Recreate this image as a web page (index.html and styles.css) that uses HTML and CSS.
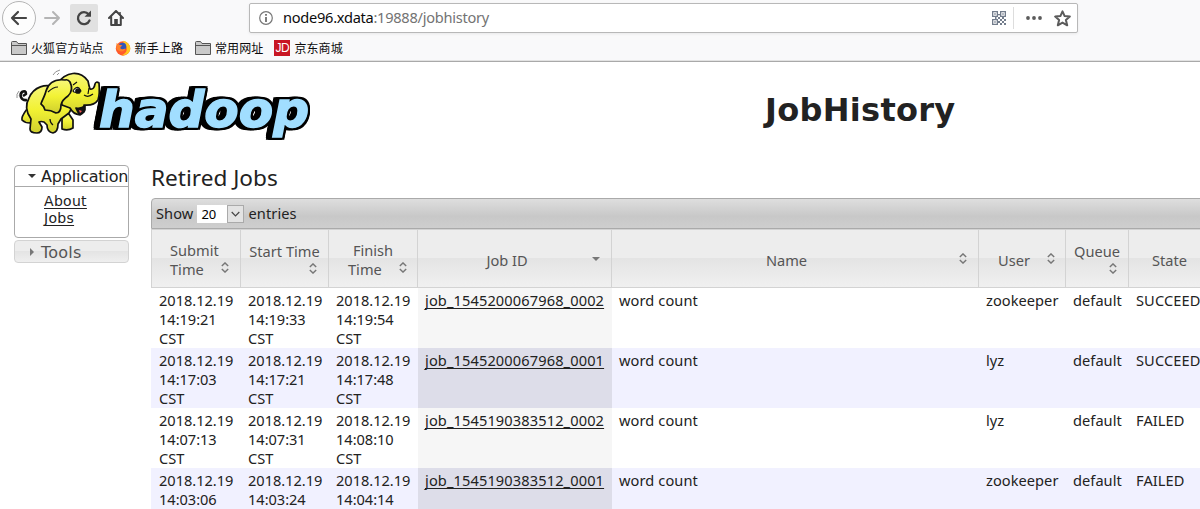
FILE: index.html
```html
<!DOCTYPE html>
<html lang="en">
<head>
<meta charset="utf-8">
<title>JobHistory</title>
<link rel="stylesheet" href="styles.css">
</head>
<body>
<svg class="defs" width="0" height="0">
  <symbol id="sort" viewBox="0 0 8 11"><path d="M.8 4 4 .9 7.200 4M.8 7 4 10.100 7.200 7" fill="none" stroke="#777" stroke-width="1.400"/></symbol>
  <symbol id="folder" viewBox="0 0 16 14"><path d="M.5 13.500V1.500q0-1 1-1h4l1.500 2h8.500v11z" fill="#c9c9c9" stroke="#555"/><path d="M1 4.500h14" stroke="#555"/></symbol>
</svg>
<header class="browser">
  <div class="nav">
    <svg class="back" viewBox="0 0 36 36"><circle cx="18" cy="18" r="16.500" fill="#fdfdfd" stroke="#b5b5b5"/><path d="M25 18H11M17 12l-6 6 6 6" fill="none" stroke="#444" stroke-width="2.200" stroke-linecap="round" stroke-linejoin="round"/></svg>
    <svg class="forward" viewBox="0 0 18 18"><path d="M2 9h14M10 3l6 6-6 6" fill="none" stroke="#b4b4b4" stroke-width="2" stroke-linecap="round" stroke-linejoin="round"/></svg>
    <span class="reload"><svg viewBox="0 0 16 16"><path d="M12.600 4.300A6 6 0 1 0 13.500 10.500" fill="none" stroke="#444" stroke-width="2.300" stroke-linecap="round"/><path d="M15 .6v6.200H8.500z" fill="#444"/></svg></span>
    <svg class="home" viewBox="0 0 16 16"><path d="M1 8 8 1l7 7M3.200 7v8h9.600V7" fill="none" stroke="#444" stroke-width="2" stroke-linecap="round" stroke-linejoin="round"/><path d="M6.200 15V9h3.600v6" fill="#444"/><path d="M12 2v3" stroke="#444" stroke-width="1.500"/></svg>
    <div class="address">
      <svg class="info" viewBox="0 0 14 14"><circle cx="7" cy="7" r="6.300" fill="none" stroke="#777" stroke-width="1.200"/><path d="M7 6v5M7 3v1.800" stroke="#666" stroke-width="1.700"/></svg>
      <span class="url"><b>node96.xdata</b>:19888/jobhistory</span>
      <svg class="qr" viewBox="0 0 14 14" fill="#737d8c"><path fill-rule="evenodd" d="M0 0h6v6H0zM1.300 1.300v3.400h3.400V1.300zM8 0h6v6H8zM9.300 1.300v3.400h3.400V1.300zM0 8h6v6H0zM1.300 9.300v3.400h3.400V9.300z"/><path d="M2.300 2.300h1.400v1.400H2.300zM10.300 2.300h1.400v1.400h-1.400zM2.300 10.300h1.400v1.400H2.300zM6 3h2v1.300H6zM3 6h1.500v2H3zM6 6h2v2H6zM10 6h2v2h-2zM8 8h2v2H8zM12 8h2v2h-2zM6 10h2v2H6zM10 10h2v2h-2zM8 12h2v2H8zM12 12h2v2h-2z"/></svg>
      <span class="divider"></span>
      <svg class="dots" viewBox="0 0 16 4" fill="#5b5b5b"><circle cx="2" cy="2" r="1.900"/><circle cx="8" cy="2" r="1.900"/><circle cx="14" cy="2" r="1.900"/></svg>
      <svg class="star" viewBox="0 0 16 16"><path d="M8 1.300 10 5.700 14.900 6.200 11.200 9.400 12.400 14.400 8 11.900 3.600 14.400 4.800 9.400 1.100 6.200 6 5.700z" fill="none" stroke="#5b5b5b" stroke-width="1.900" stroke-linejoin="round"/></svg>
    </div>
  </div>
  <nav class="bookmarks">
    <span class="mark"><svg viewBox="0 0 16 14"><use href="#folder"/></svg>火狐官方站点</span>
    <span class="mark fox"><svg viewBox="0 0 16 16"><circle cx="8" cy="8.500" r="7.200" fill="#ff5a2b"/><path d="M8 .8c5 1 8 5 7.200 9-1 4-5 6-9 5.500C11 14 13 10 11 6 10 4 8 3 8 .8z" fill="#ffc81f"/><circle cx="7.500" cy="6.500" r="3.800" fill="#3156b8"/><path d="M1.500 3C3 5 5 4.500 7.500 5.500 6 6.500 5 7 5.500 8.500c1.500 1.500 3 .5 5 0C9.500 12 4.500 12.500 1.500 9z" fill="#ff812a"/></svg>新手上路</span>
    <span class="mark web"><svg viewBox="0 0 16 14"><use href="#folder"/></svg>常用网址</span>
    <span class="mark shop"><i>JD</i>京东商城</span>
  </nav>
</header>
<div class="page">
  <div class="banner">
    <svg class="logo" viewBox="0 0 304 80">
      <defs><linearGradient id="skin" x2="0" y2="1"><stop offset="0" stop-color="#f7f77a"/><stop offset=".5" stop-color="#f2f233"/><stop offset="1" stop-color="#cfcf2e"/></linearGradient></defs>
      <g stroke="#111" stroke-width="1.700" stroke-linejoin="round" fill="url(#skin)">
        <path d="M15 33C9 34 7 28 10 25q4-2 4 2l-3 2" fill="none" stroke-width="2.600"/>
        <path d="M15 42q-6 8-5 11 3 3 8 3l3-4z"/>
        <path d="M50 47h7l4 6v8q-5 3-11 1z"/>
        <path d="M17 31C22 19 34 17 42 20L62 37 57 46 49 52 46 57Q46 65 41 66 35 65 35 58L32 55Q29 54 27 55L30 60Q30 66 25 66 18 66 18 62L19 52C14 45 13 38 17 31z"/>
        <path d="M45 17C54 4 68 3 76 14Q77 19 78 22 82 23 83 17 84 14 87 16 88 27 86 33 82 39 72 38 73 45 68 48 61 47 58 41L50 38z"/>
        <path d="M64 41q5 1 9-2 1 8-6 8z" fill="#151515"/><path d="M67 43l3 1-2 2z" fill="#f55" stroke="none"/>
        <path d="M53 13C45 12 37 14 34 24 33 29 29 35 29 37Q32 39 33 43 39 43 44 46 49 46 49 38 50 33 56 29 62 23 58 15 56 12 53 13z"/>
        <path d="M61 24q3-5 6-3l2 3q-4 2-7 1z" fill="#fff" stroke-width="1.200"/><circle cx="66" cy="24" r="2" fill="#111"/>
        <path d="M61 18l4-3M72 28q4 3 9-1M77 21l-1 6M36 25q5-5 10-5M38 52q0 4 3 6" fill="none" stroke-width="1.200"/>
      </g>
      <path d="M41 8q2-4 7-5M45 8l2-2M5 31q-1-4 2-7M7 29l1-2" fill="none" stroke="#777" stroke-width=".8"/>
      <text class="wordmark" x="87" y="60" textLength="210" lengthAdjust="spacingAndGlyphs">hadoop</text>
    </svg>
    <h1>JobHistory</h1>
  </div>
  <div class="columns">
    <aside>
      <div class="panel open">
        <h3><svg viewBox="0 0 8 8"><path d="M0 2h8L4 6z" fill="#333"/></svg>Application</h3>
        <ul><li><a>About</a></li><li><a>Jobs</a></li></ul>
      </div>
      <div class="panel closed"><h3><svg viewBox="0 0 8 8"><path d="M2 0v8l4-4z" fill="#777"/></svg>Tools</h3></div>
    </aside>
    <main>
      <h2>Retired Jobs</h2>
      <div class="toolbar">Show <span class="select"><span>20</span><i><svg viewBox="0 0 9 6"><path d="M.7 1 4.500 4.800 8.300 1" fill="none" stroke="#444" stroke-width="1.200"/></svg></i></span> entries</div>
      <table>
        <colgroup><col class="c-submit"><col class="c-start"><col class="c-finish"><col class="c-id"><col class="c-name"><col class="c-user"><col class="c-queue"><col class="c-state"></colgroup>
        <thead><tr>
          <th><div class="two"><span>Submit<br>Time</span><svg><use href="#sort"/></svg></div></th>
          <th><div class="stack"><span>Start Time</span><svg><use href="#sort"/></svg></div></th>
          <th><div class="two finish"><span><em>Finish</em><br>Time</span><svg><use href="#sort"/></svg></div></th>
          <th><div class="one id"><span>Job ID</span><svg viewBox="0 0 8 11"><path d="M0 4h8L4 8z" fill="#777"/></svg></div></th>
          <th><div class="one name"><span>Name</span><svg><use href="#sort"/></svg></div></th>
          <th><div class="one user"><span>User</span><svg><use href="#sort"/></svg></div></th>
          <th><div class="stack"><span>Queue</span><svg><use href="#sort"/></svg></div></th>
          <th><div class="one state"><span>State</span></div></th>
        </tr></thead>
        <tbody>
          <tr><td>2018.12.19<br>14:19:21<br>CST</td><td>2018.12.19<br>14:19:33<br>CST</td><td>2018.12.19<br>14:19:54<br>CST</td><td class="sorted"><a>job_1545200067968_0002</a></td><td>word count</td><td>zookeeper</td><td>default</td><td>SUCCEEDED</td></tr>
          <tr><td>2018.12.19<br>14:17:03<br>CST</td><td>2018.12.19<br>14:17:21<br>CST</td><td>2018.12.19<br>14:17:48<br>CST</td><td class="sorted"><a>job_1545200067968_0001</a></td><td>word count</td><td>lyz</td><td>default</td><td>SUCCEEDED</td></tr>
          <tr><td>2018.12.19<br>14:07:13<br>CST</td><td>2018.12.19<br>14:07:31<br>CST</td><td>2018.12.19<br>14:08:10<br>CST</td><td class="sorted"><a>job_1545190383512_0002</a></td><td>word count</td><td>lyz</td><td>default</td><td>FAILED</td></tr>
          <tr><td>2018.12.19<br>14:03:06</td><td>2018.12.19<br>14:03:24</td><td>2018.12.19<br>14:04:14</td><td class="sorted"><a>job_1545190383512_0001</a></td><td>word count</td><td>zookeeper</td><td>default</td><td>FAILED</td></tr>
        </tbody>
      </table>
    </main>
  </div>
</div>
</body>
</html>
```

FILE: styles.css
```css
* { box-sizing: border-box; }
html, body { height: 509px; overflow: hidden; }
body { margin: 0; background: #fff; color: #222; font: 14.6px/19px "Noto Sans", "Noto Sans CJK SC", sans-serif; letter-spacing: 0; }
svg { display: block; flex: none; }
.defs { position: absolute; }

.browser { height: 62px; background: #f9f9fa; border-bottom: 1px solid #a9a9a9; box-shadow: inset 0 -1px #e2e2e2; }
.nav { display: flex; align-items: center; height: 36px; padding-left: 1px; }
.back { width: 36px; height: 36px; }
.forward { width: 18px; height: 18px; margin-left: 6px; }
.reload { width: 28px; height: 28px; margin-left: 9px; display: grid; place-items: center; background: #e1e1e1; border-radius: 2px; }
.reload svg { width: 16px; height: 16px; }
.home { width: 16px; height: 16px; margin-left: 10px; }
.address { display: flex; align-items: center; width: 829px; height: 30px; margin-left: 125px; padding: 0 6px 0 9px; background: #fff; border: 1px solid #b8b8b8; border-radius: 2px; box-shadow: 0 1px 3px #0001; }
.info { width: 14px; height: 14px; }
.url { flex: 1; margin: -2px 0 0 10px; color: #737373; letter-spacing: -.27px; }
.url b { font-weight: normal; color: #0c0c0d; }
.qr { width: 14px; height: 14px; }
.divider { width: 1px; height: 22px; margin-left: 7px; background: #ddd; }
.dots { width: 16px; height: 4px; margin-left: 12px; }
.star { width: 17px; height: 17px; margin-left: 12px; }
.bookmarks { display: flex; height: 24px; padding-left: 11px; color: #0c0c0d; font: 12px/24px "Noto Sans CJK SC", sans-serif; letter-spacing: .1px; }
.mark { display: flex; align-items: center; }
.mark svg { width: 16px; height: 14px; margin-right: 4px; }
.mark.fox { margin-left: 11px; }
.mark.fox svg { height: 16px; }
.mark.web { margin-left: 12px; }
.mark.shop { margin-left: 11px; }
.mark i { width: 16px; height: 16px; margin-right: 4px; background: #c81623; color: #fff; font: 12px/16px "Liberation Sans", sans-serif; text-align: center; letter-spacing: -.5px; }

.banner { display: flex; height: 103px; }
.logo { width: 304px; height: 80px; margin: 5px 0 0 12px; }
.wordmark { font: italic bold 50px "DejaVu Sans", sans-serif; fill: #a1deff; stroke: #a1deff; stroke-width: 1.5px; filter: drop-shadow(2px 0 0 #000) drop-shadow(-3px 0 0 #000) drop-shadow(0 2px 0 #000) drop-shadow(0 -2px 0 #000) drop-shadow(-3px 0 0 #000); }
.banner h1 { margin: 29px 0 0 449px; font: bold 32px/38px "DejaVu Sans", sans-serif; letter-spacing: .3px; }

.columns { display: flex; padding-left: 14px; }
aside { width: 115px; flex: none; font-family: "DejaVu Sans", sans-serif; }
.panel { border: 1px solid #aaa; border-radius: 4px; overflow: hidden; }
.panel h3 { display: flex; align-items: center; height: 21px; margin: 0; padding-left: 13px; font-size: 16px; font-weight: normal; letter-spacing: -.2px; }
.panel h3 svg { width: 8px; height: 8px; margin-right: 5px; }
.open { height: 73px; }
.open h3 { border-bottom: 1px solid #aaa; }
.panel ul { list-style: none; margin: 0; padding: 6px 0 0 29px; font-size: 14px; line-height: 17px; letter-spacing: .3px; }
.closed { height: 23px; margin-top: 2px; border-color: #d3d3d3; background: linear-gradient(#ededed 50%, #e4e4e4 50%, #efefef); color: #555; }
.closed h3 { height: 23px; letter-spacing: .2px; }
.closed h3 svg { margin-top: -2px; }
a { text-decoration: underline; text-underline-offset: 2px; text-decoration-skip-ink: none; }

main { width: 1061px; flex: none; margin-left: 22px; }
h2 { margin: 0; height: 33px; padding-top: 1px; font-size: 22.6px; line-height: 24px; font-weight: normal; }
.toolbar { display: flex; align-items: center; gap: 4px; height: 31px; padding-left: 4px; border: 1px solid #aaa; border-radius: 4px 0 0; background: linear-gradient(#dedede, #c8c8c8 60%, #cecece); letter-spacing: .1px; }
.select { display: flex; width: 47px; height: 18px; background: #fff; color: #000; font-size: 13px; line-height: 18px; letter-spacing: -.2px; }
.select span { width: 30px; padding-left: 4px; }
.select i { width: 17px; display: grid; place-items: center; background: #e3e3e3; border: 1px solid #aaa; }
.select svg { width: 9px; height: 6px; }

table { width: 1061px; table-layout: fixed; border-collapse: separate; border-spacing: 0; }
.c-submit { width: 90px; } .c-start { width: 88px; } .c-finish { width: 89px; } .c-id { width: 194px; } .c-name { width: 367px; } .c-user { width: 87px; } .c-queue { width: 63px; } .c-state { width: 83px; }
th { height: 59px; padding: 0; font-weight: normal; color: #555; border: solid #d3d3d3; border-width: 1px 1px 1px 0; background: linear-gradient(#ededed 50%, #e4e4e4 50%, #f0f0f0); }
th:first-child { border-left-width: 1px; }
th svg { width: 8px; height: 11px; }
th div { height: 57px; display: flex; }
.two { align-items: center; padding: 3px 0 0 18px; }
.two span { width: 50px; text-align: left; white-space: nowrap; }
.two em { font-style: normal; margin-left: 5px; }
.two.finish { padding-left: 19px; }
.two svg { margin: 15px 0 0 1px; }
.stack { flex-direction: column; justify-content: center; padding: 0 11px 0 0; }
.stack span { margin: -2px -11px 0 0; }
.stack svg { align-self: flex-end; margin-top: 2px; }
.one { align-items: center; padding: 4px 11px 0 2px; }
.one span { flex: 1; text-align: center; }
.one svg { margin-bottom: 4px; }
.one.user { padding-right: 10px; padding-left: 2px; }
.one.id { padding-left: 4px; }
.one.state { padding: 4px 1px 0 0; }
td { height: 60px; padding: 3px 0 0 7px; vertical-align: top; white-space: nowrap; letter-spacing: .05px; }
td:first-child { padding-left: 8px; }
td:nth-child(-n+3) { letter-spacing: -.03px; }
td:nth-child(5), td:nth-child(8) { letter-spacing: .1px; }
tbody tr:nth-child(even) { background: #f1f1ff; }
td.sorted { background: #f6f6f6; letter-spacing: .12px; }
tr:nth-child(even) td.sorted { background: #dddde9; }
```
